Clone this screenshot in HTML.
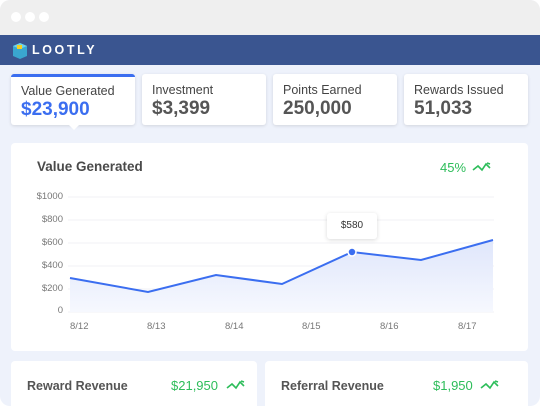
<!DOCTYPE html><html><head><style>
*{margin:0;padding:0;box-sizing:border-box}
body{width:540px;height:406px;overflow:hidden;background:#fff;font-family:"Liberation Sans",sans-serif}
.frame{position:absolute;left:0;top:0;width:540px;height:406px;border-radius:10px;overflow:hidden;background:#eef2fb}
.top{height:35px;background:#efefef;position:relative}
.dot{position:absolute;top:12px;width:10px;height:10px;border-radius:50%;background:#fff}
.hdr{position:absolute;top:35px;left:0;width:540px;height:30px;background:#3a5590}
.logo{position:absolute;left:32px;top:8px;color:#fff;font-size:12.5px;font-weight:bold;letter-spacing:2.6px}
.card{position:absolute;top:74px;height:51px;background:#fff;border-radius:3px;box-shadow:0 1px 3px rgba(0,0,0,.12);padding:9px 10px}
.card .l{font-size:12.5px;color:#444}
.card .v{font-size:19px;font-weight:bold;color:#555;margin-top:1px}
.big{position:absolute;left:11px;top:143px;width:517px;height:208px;background:#fff;border-radius:4px}
.ax{position:absolute;font-size:9.5px;color:#777}
.bc{position:absolute;top:361px;height:50px;background:#fff;border-radius:4px}
.g{color:#2dbd5a}
</style></head><body><div class="frame">
<div class="top"><div class="dot" style="left:11px"></div><div class="dot" style="left:25px"></div><div class="dot" style="left:39px"></div></div>
<div class="hdr"><svg style="position:absolute;left:12px;top:5px" width="16" height="20" viewBox="0 0 16 20"><path d="M1 6 L8 3 L15 6 L15 16 L8 19 L1 16Z" fill="#3aa6d0"/><path d="M1 6 L8 9 L15 6 L8 3Z" fill="#6dd0ea"/><rect x="5" y="5" width="5" height="4" fill="#f5d020"/></svg><div class="logo">LOOTLY</div></div>
<div class="card" style="left:11px;width:124px;border-top:3px solid #3b6ef0;padding-top:7px"><div class="l">Value Generated</div><div class="v" style="color:#3b6ef0">$23,900</div></div>
<div style="position:absolute;left:69px;top:125px;width:0;height:0;border-left:5px solid transparent;border-right:5px solid transparent;border-top:5px solid #fff"></div>
<div class="card" style="left:142px;width:124px"><div class="l">Investment</div><div class="v">$3,399</div></div>
<div class="card" style="left:273px;width:124px"><div class="l">Points Earned</div><div class="v">250,000</div></div>
<div class="card" style="left:404px;width:124px"><div class="l">Rewards Issued</div><div class="v">51,033</div></div>
<div class="big"></div>
<div style="position:absolute;left:37px;top:159px;font-size:13.5px;color:#4a4a4a;font-weight:bold">Value Generated</div>
<div class="g" style="position:absolute;left:440px;top:160px;font-size:13px">45%</div>
<svg style="position:absolute;left:472px;top:161px" width="20" height="12"><path d="M1 9 L6 5 L10 9 L14 3 L18 7 M15 2 L18 3" stroke="#2dbd5a" stroke-width="1.6" fill="none"/></svg>
<div class="ax" style="right:477px;top:191px">$1000</div>
<div class="ax" style="right:477px;top:214px">$800</div>
<div class="ax" style="right:477px;top:237px">$600</div>
<div class="ax" style="right:477px;top:260px">$400</div>
<div class="ax" style="right:477px;top:283px">$200</div>
<div class="ax" style="right:477px;top:305px">0</div>
<svg style="position:absolute;left:0;top:0" width="540" height="406">
<g stroke="#f1f1f4" stroke-width="1"><line x1="68" x2="494" y1="197" y2="197"/><line x1="68" x2="494" y1="220" y2="220"/><line x1="68" x2="494" y1="243" y2="243"/><line x1="68" x2="494" y1="266" y2="266"/><line x1="68" x2="494" y1="289" y2="289"/><line x1="68" x2="494" y1="312" y2="312"/></g>
<defs><linearGradient id="f" x1="0" y1="0" x2="0" y2="1"><stop offset="0" stop-color="#dfe6fb"/><stop offset="1" stop-color="#f6f8fe"/></linearGradient></defs>
<path d="M70 278 L148 292 L216 275 L282 284 L352 252 L421 260 L493 240 L493 312 L70 312Z" fill="url(#f)"/>
<path d="M70 278 L148 292 L216 275 L282 284 L352 252 L421 260 L493 240" stroke="#3b6ef0" stroke-width="2" fill="none"/>
<circle cx="352" cy="252" r="4" fill="#3b6ef0" stroke="#fff" stroke-width="1.5"/>
</svg>
<div style="position:absolute;left:327px;top:213px;width:50px;height:26px;background:#fff;border-radius:3px;box-shadow:0 1px 4px rgba(0,0,0,.15);font-size:10px;color:#333;text-align:center;line-height:26px">$580</div>
<div class="ax" style="left:70px;top:321px">8/12</div><div class="ax" style="left:147px;top:321px">8/13</div><div class="ax" style="left:225px;top:321px">8/14</div><div class="ax" style="left:302px;top:321px">8/15</div><div class="ax" style="left:380px;top:321px">8/16</div><div class="ax" style="left:458px;top:321px">8/17</div>
<div class="bc" style="left:11px;width:246px"></div><div class="bc" style="left:265px;width:263px"></div>
<div style="position:absolute;left:27px;top:379px;font-size:12.5px;color:#555;font-weight:bold">Reward Revenue</div>
<div class="g" style="position:absolute;left:171px;top:378px;font-size:13px">$21,950</div>
<svg style="position:absolute;left:226px;top:379px" width="20" height="12"><path d="M1 9 L6 5 L10 9 L14 3 L18 7 M15 2 L18 3" stroke="#2dbd5a" stroke-width="1.6" fill="none"/></svg>
<div style="position:absolute;left:281px;top:379px;font-size:12.5px;color:#555;font-weight:bold">Referral Revenue</div>
<div class="g" style="position:absolute;left:433px;top:378px;font-size:13px">$1,950</div>
<svg style="position:absolute;left:480px;top:379px" width="20" height="12"><path d="M1 9 L6 5 L10 9 L14 3 L18 7 M15 2 L18 3" stroke="#2dbd5a" stroke-width="1.6" fill="none"/></svg>
</div></body></html>
